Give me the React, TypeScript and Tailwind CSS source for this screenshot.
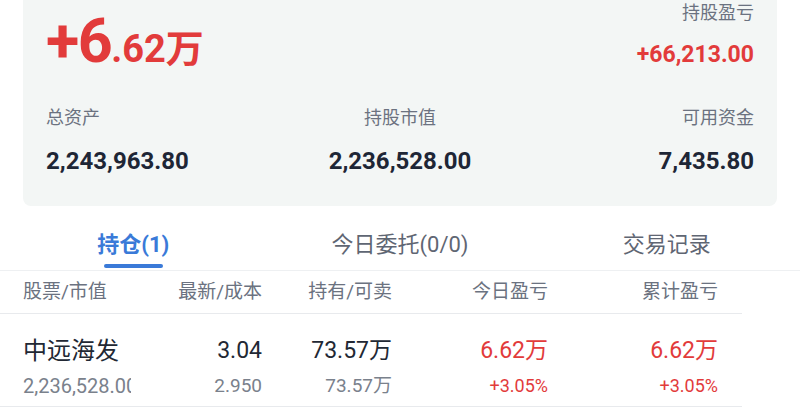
import React, { FC } from "react";

const font = { fontFamily: 'Roboto, "Noto Sans CJK SC", sans-serif' };

type Holding = {
  name: string;
  value: string;
  price: string;
  cost: string;
  hold: string;
  sellable: string;
  todayPl: string;
  todayPct: string;
  totalPl: string;
  totalPct: string;
};

const holdings: Holding[] = [
  {
    name: "中远海发",
    value: "2,236,528.00",
    price: "3.04",
    cost: "2.950",
    hold: "73.57万",
    sellable: "73.57万",
    todayPl: "6.62万",
    todayPct: "+3.05%",
    totalPl: "6.62万",
    totalPct: "+3.05%",
  },
];

const tabs = ["持仓(1)", "今日委托(0/0)", "交易记录"];

const App: FC = () => {
  return (
    <div className="w-[800px] h-[415px] bg-white overflow-hidden" style={font}>
      {/* summary card */}
      <div className="mx-[23px] h-[206px] bg-[#f3f6f5] rounded-b-lg px-[23px] flex flex-col">
        <div className="flex justify-between h-[95px]">
          <div className="pt-[11px] text-[#e23b3b] font-bold flex items-baseline">
            <span className="text-[61px] leading-[60px] tracking-tight">+6</span>
            <span className="text-[38px] leading-[38px]">.62万</span>
          </div>
          <div className="flex flex-col items-end">
            <div className="text-[18px] leading-[26px] text-[#6b7280]">持股盈亏</div>
            <div className="mt-[15px] text-[23px] leading-[28px] font-bold text-[#e23b3b]">+66,213.00</div>
          </div>
        </div>
        <div className="grid grid-cols-3 mt-[10px]">
          <div>
            <div className="text-[18px] leading-[26px] text-[#6b7280]">总资产</div>
            <div className="mt-[15px] text-[24px] leading-[30px] font-bold text-[#1e2636]">2,243,963.80</div>
          </div>
          <div className="text-center">
            <div className="text-[18px] leading-[26px] text-[#6b7280]">持股市值</div>
            <div className="mt-[15px] text-[24px] leading-[30px] font-bold text-[#1e2636]">2,236,528.00</div>
          </div>
          <div className="text-right">
            <div className="text-[18px] leading-[26px] text-[#6b7280]">可用资金</div>
            <div className="mt-[15px] text-[24px] leading-[30px] font-bold text-[#1e2636]">7,435.80</div>
          </div>
        </div>
      </div>

      {/* tabs */}
      <div className="grid grid-cols-3 h-[65px] border-b border-[#eef0f2]">
        {tabs.map((t, i) => (
          <div key={t} className="flex flex-col items-center pt-[24px]">
            <div
              className={
                i === 0
                  ? "text-[22px] leading-[30px] font-bold text-[#3a7ad8]"
                  : "text-[22px] leading-[30px] text-[#5f6673]"
              }
            >
              {t}
            </div>
            {i === 0 && <div className="mt-[4px] w-[59px] h-[4px] rounded-full bg-[#3a7ad8]" />}
          </div>
        ))}
      </div>

      {/* table */}
      <div className="w-[742px]">
        <div className="grid grid-cols-[131px_131px_130px_156px_170px] h-[43px] items-center border-b border-[#e8eaed] text-[19px] text-[#6b7280]">
          <div className="pl-[23px]">股票/市值</div>
          <div className="text-right">最新/成本</div>
          <div className="text-right">持有/可卖</div>
          <div className="text-right">今日盈亏</div>
          <div className="text-right">累计盈亏</div>
        </div>
        {holdings.map((h) => (
          <div
            key={h.name}
            className="grid grid-cols-[131px_131px_130px_156px_170px] h-[93px] border-b border-[#e8eaed] pt-[22px]"
          >
            <div className="pl-[23px] overflow-hidden whitespace-nowrap">
              <div className="text-[24px] leading-[30px] text-[#222834]">{h.name}</div>
              <div className="mt-[7px] text-[20px] leading-[26px] text-[#7a818c] overflow-hidden">{h.value}</div>
            </div>
            <div className="text-right">
              <div className="text-[23px] leading-[30px] text-[#222834]">{h.price}</div>
              <div className="mt-[7px] text-[19px] leading-[26px] text-[#7a818c]">{h.cost}</div>
            </div>
            <div className="text-right">
              <div className="text-[23px] leading-[30px] text-[#222834]">{h.hold}</div>
              <div className="mt-[7px] text-[19px] leading-[26px] text-[#7a818c]">{h.sellable}</div>
            </div>
            <div className="text-right">
              <div className="text-[23px] leading-[30px] text-[#e23b3b]">{h.todayPl}</div>
              <div className="mt-[7px] text-[18px] leading-[26px] text-[#e23b3b]">{h.todayPct}</div>
            </div>
            <div className="text-right">
              <div className="text-[23px] leading-[30px] text-[#e23b3b]">{h.totalPl}</div>
              <div className="mt-[7px] text-[18px] leading-[26px] text-[#e23b3b]">{h.totalPct}</div>
            </div>
          </div>
        ))}
      </div>
    </div>
  );
};

export default App;
